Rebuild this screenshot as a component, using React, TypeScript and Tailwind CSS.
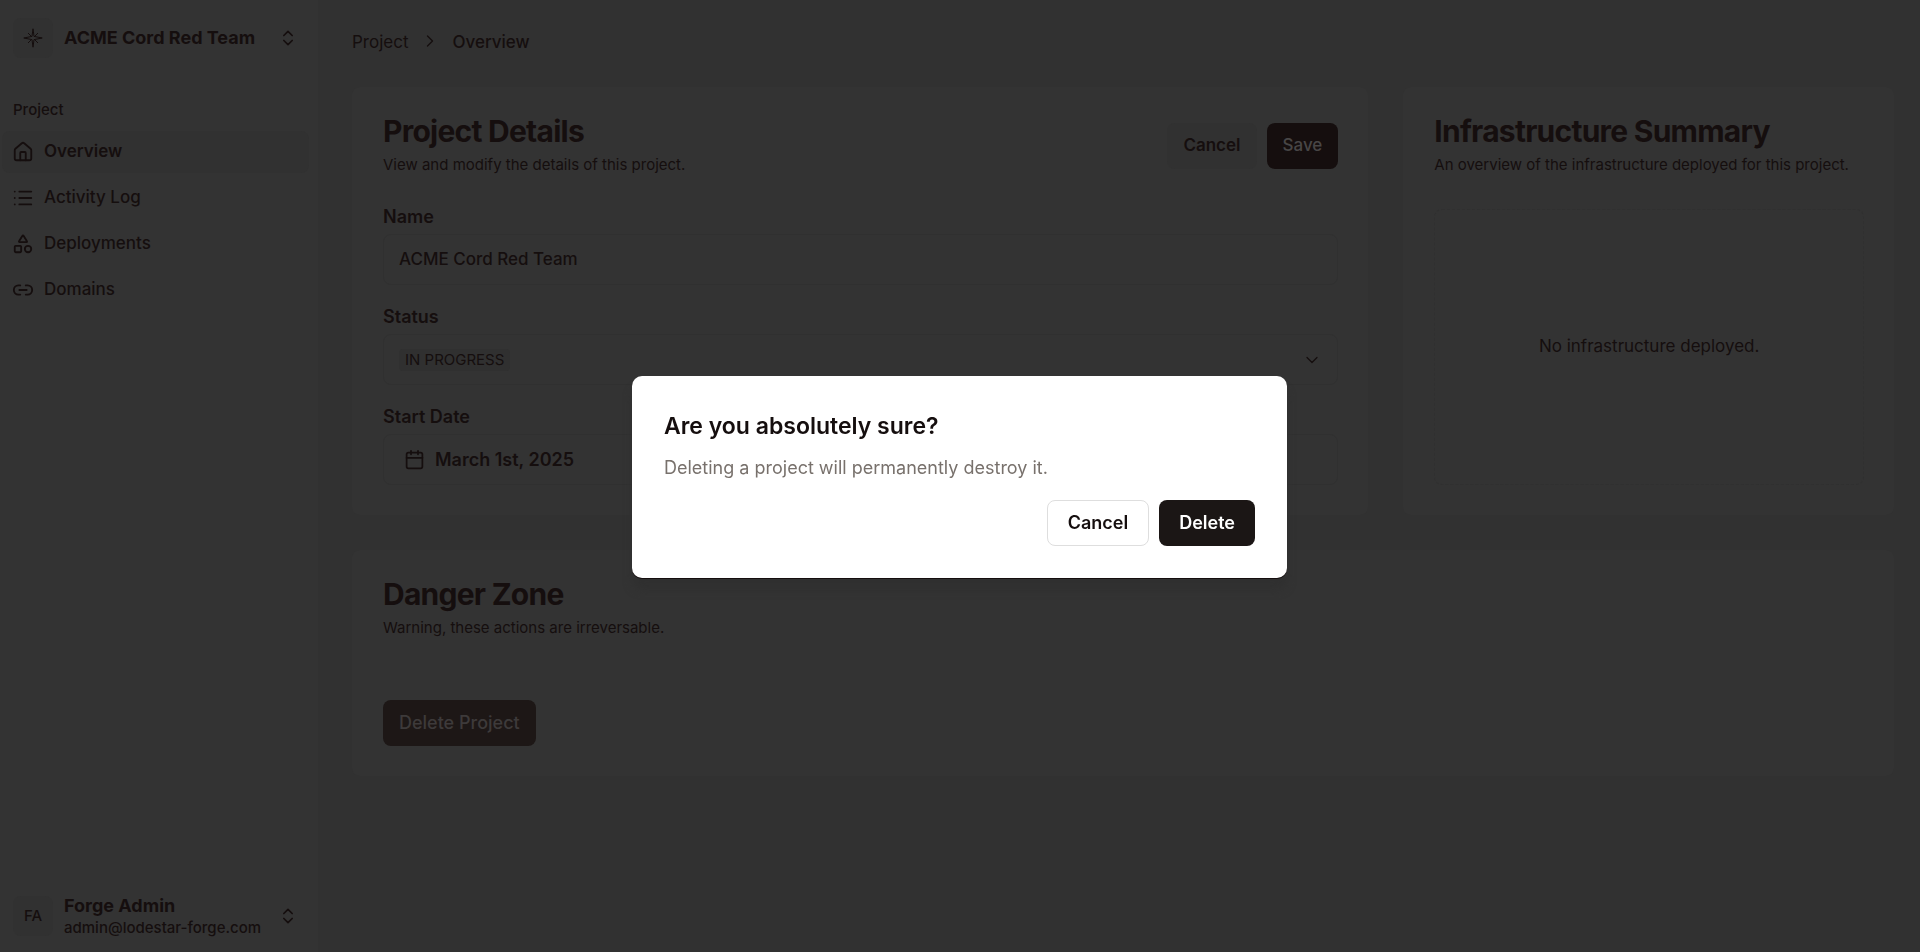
import { useState } from "react";
import type { ReactNode } from "react";
import { Calendar, ChevronDown, ChevronRight, ChevronsUpDown, House, Link2, List, Shapes } from "lucide-react";

const navItems = [
  { label: "Overview", icon: House, active: true },
  { label: "Activity Log", icon: List, active: false },
  { label: "Deployments", icon: Shapes, active: false },
  { label: "Domains", icon: Link2, active: false },
];

function StarLogo() {
  return (
    <svg viewBox="0 0 20 20" className="h-5 w-5" fill="none" stroke="currentColor" aria-hidden="true">
      <path d="M10 0.8 L11 8.4 L19.200 10 L11 11.600 L10 19.200 L9 11.600 L0.800 10 L9 8.4 Z" strokeWidth="1" />
      <path d="M5 5 L8.500 8.500 M15 5 L11.500 8.500 M5 15 L8.500 11.500 M15 15 L11.500 11.500" strokeWidth="1" />
    </svg>
  );
}

function Sidebar() {
  return (
    <aside className="flex w-[318px] shrink-0 flex-col justify-between bg-[#333333]">
      <div>
        <button className="mt-4 flex h-11 w-[307px] items-center gap-[11px] pr-[9px] pl-[13px] text-left">
          <span className="flex h-10 w-10 items-center justify-center rounded-lg bg-[#313131]">
            <StarLogo />
          </span>
          <span className="flex-1 text-lg font-bold">ACME Cord Red Team</span>
          <ChevronsUpDown className="h-5 w-5" />
        </button>

        <div className="mt-9 flex h-7 items-center px-[13px] text-[15px] font-medium">Project</div>
        <nav className="mt-[7px] ml-0.5 flex w-[307px] flex-col gap-1">
          {navItems.map(({ label, icon: Icon, active }) => (
            <a
              key={label}
              href="#"
              className={`flex h-[42px] items-center gap-2.5 rounded-lg px-2.5 text-[17px] ${
                active ? "bg-[#313131] font-semibold" : "font-medium"
              }`}
            >
              <Icon className="h-[22px] w-[22px]" />
              {label}
            </a>
          ))}
        </nav>
      </div>

      <button className="mb-3 flex h-12 w-[307px] items-center gap-[11px] pr-[9px] pl-[13px] text-left">
        <span className="flex h-10 w-10 items-center justify-center rounded-lg bg-[#313131] text-[15px] font-medium">
          FA
        </span>
        <span className="flex flex-1 flex-col">
          <span className="text-lg leading-6 font-bold">Forge Admin</span>
          <span className="text-[15px] leading-5 font-medium">admin@lodestar-forge.com</span>
        </span>
        <ChevronsUpDown className="h-5 w-5" />
      </button>
    </aside>
  );
}

function Card({ title, text, action, className = "", children }: {
  title: string;
  text: string;
  action?: ReactNode;
  className?: string;
  children: ReactNode;
}) {
  return (
    <section className={`flex flex-col rounded-lg bg-[#333333] pt-7 pr-[30px] pb-[30px] pl-[31px] ${className}`}>
      <header className="flex items-center justify-between">
        <div>
          <h2 className="text-3xl leading-8 font-bold tracking-tight">{title}</h2>
          <p className="mt-1.5 text-[15px] leading-6">{text}</p>
        </div>
        {action}
      </header>
      {children}
    </section>
  );
}

function ProjectDetails() {
  const [name, setName] = useState("ACME Cord Red Team");

  return (
    <Card
      title="Project Details"
      text="View and modify the details of this project."
      className="col-span-2"
      action={
        <div className="flex gap-2.5">
          <button className="h-[46px] rounded-lg bg-[#313131] px-4 text-[17px] font-semibold">Cancel</button>
          <button className="h-[46px] rounded-lg bg-[#150e0e] px-4 text-[17px] font-medium text-[#484646]">Save</button>
        </div>
      }
    >
      <div className="mt-[22px] flex flex-col gap-3.5 text-lg">
        <div>
          <label htmlFor="name" className="block leading-[35px] font-semibold">Name</label>
          <input
            id="name"
            value={name}
            onChange={(e) => setName(e.target.value)}
            className="block h-[51px] w-full rounded-lg border border-[#303030] px-[15px] pb-0.5 text-[17px] font-medium outline-none"
          />
        </div>
        <div>
          <span id="status-label" className="block leading-[35px] font-semibold">Status</span>
          <button
            aria-labelledby="status-label"
            className="flex h-[51px] w-full items-center justify-between rounded-lg border border-[#303030] px-[15px]"
          >
            <span className="rounded bg-[#303030] px-1.5 text-[15px] leading-[22px]">IN PROGRESS</span>
            <ChevronDown className="h-5 w-5" strokeWidth={1.5} />
          </button>
        </div>
        <div>
          <span id="date-label" className="block leading-[35px] font-semibold">Start Date</span>
          <button
            aria-labelledby="date-label"
            className="flex h-[51px] w-full items-center gap-2.5 rounded-lg border border-[#303030] px-5 font-semibold"
          >
            <Calendar className="h-[21px] w-[21px]" />
            March 1st, 2025
          </button>
        </div>
      </div>
    </Card>
  );
}

function DeleteDialog() {
  return (
    <div className="fixed inset-0 flex items-center justify-center pt-0.5 pr-px">
      <div
        role="alertdialog"
        aria-labelledby="dialog-title"
        aria-describedby="dialog-text"
        className="w-[655px] rounded-[10px] bg-white p-8 shadow-[0_1px_0_#150e0e,0_12px_8px_#303030]"
      >
        <h2 id="dialog-title" className="text-[23px] leading-9 font-semibold text-[#150e0e]">
          Are you absolutely sure?
        </h2>
        <p id="dialog-text" className="mt-2.5 text-lg leading-7 text-[#78716c]">
          Deleting a project will permanently destroy it.
        </p>
        <div className="mt-[18px] flex justify-end gap-2.5 text-lg font-semibold">
          <button className="h-[46px] rounded-lg border border-[#dedede] px-5 text-[#150e0e]">Cancel</button>
          <button className="h-[46px] rounded-lg bg-[#1b1615] px-5 text-white">Delete</button>
        </div>
      </div>
    </div>
  );
}

export default function App() {
  return (
    <div className="flex min-h-screen bg-[#313131] font-['Inter',sans-serif] text-[#150e0e]">
      <Sidebar />
      <main className="min-w-0 flex-1 pr-[26px] pl-[34px]">
        <nav className="flex h-[87px] items-start gap-3 pt-7 text-[17px] leading-7">
          <a href="#">Project</a>
          <ChevronRight className="mt-[3px] h-5 w-5" strokeWidth={1.5} />
          <span className="font-medium">Overview</span>
        </nav>

        <div className="grid grid-cols-3 gap-[35px]">
          <ProjectDetails />
          <Card title="Infrastructure Summary" text="An overview of the infrastructure deployed for this project.">
            <div className="mt-8 flex flex-1 items-center justify-center rounded-lg border border-dashed border-[#303030] text-[17px]">
              No infrastructure deployed.
            </div>
          </Card>
          <Card title="Danger Zone" text="Warning, these actions are irreversable." className="col-span-3">
            <button className="mt-[60px] h-[46px] self-start rounded-lg bg-[#1d1716] px-4 text-lg font-medium text-[#3d3a3a]">
              Delete Project
            </button>
          </Card>
        </div>
      </main>
      <DeleteDialog />
    </div>
  );
}
